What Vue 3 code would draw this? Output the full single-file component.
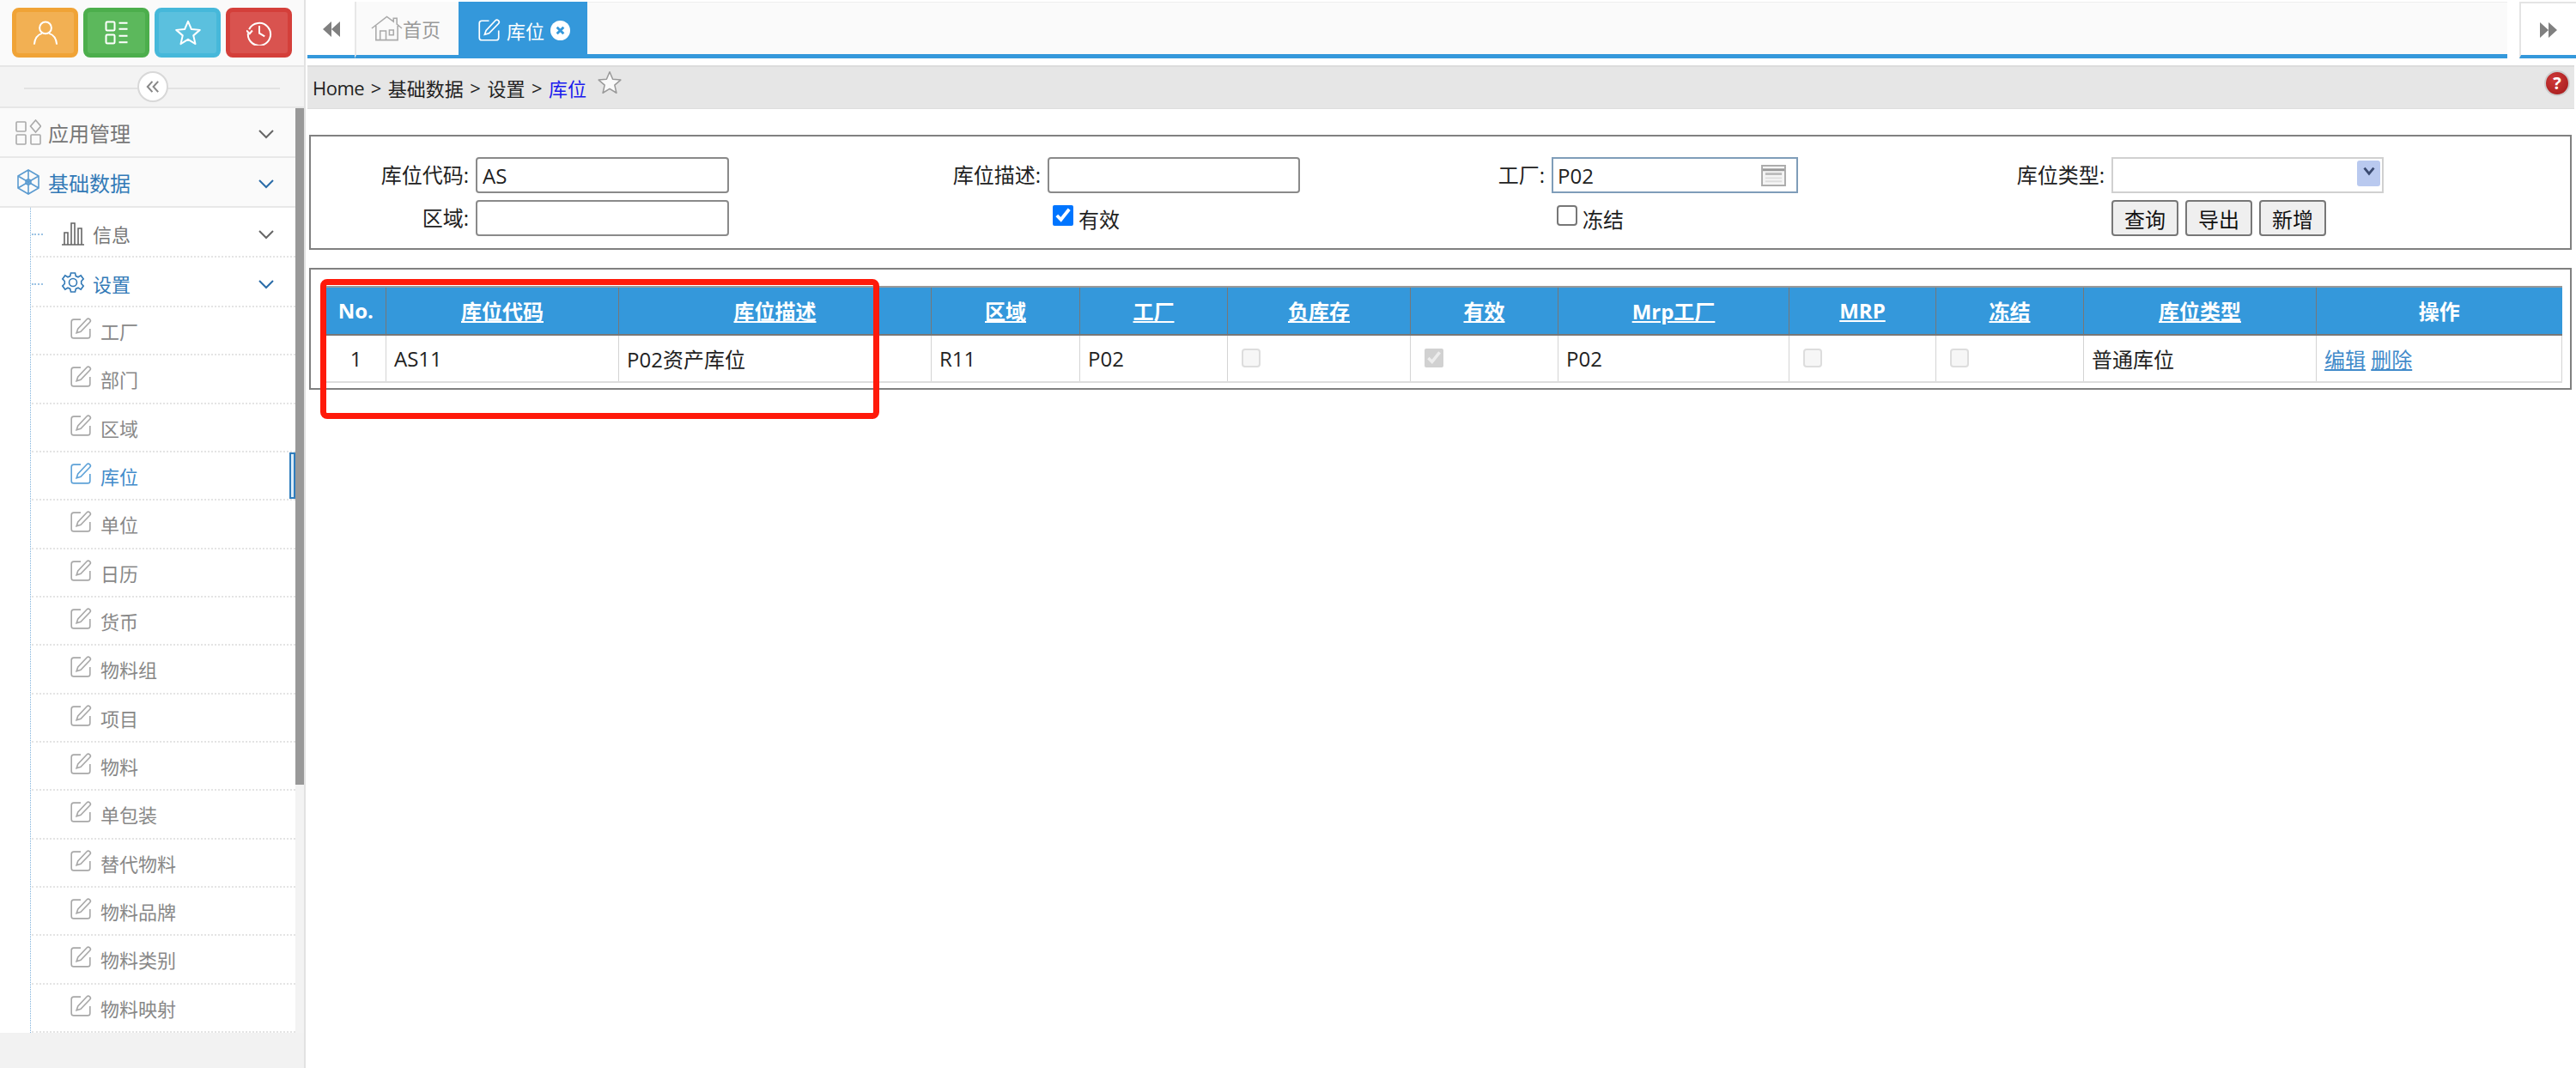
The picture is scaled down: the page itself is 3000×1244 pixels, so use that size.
<template>
  <div class="page">
    <aside class="sidebar">
      <div class="shortcuts">
        <div class="shortcut orange">
          <svg viewBox="0 0 24 24" class="shortcut-icon"><circle cx="12" cy="7.5" r="5.5" /><path d="M1.5 23c.5-6 3-9 7.2-10.3M22.5 23c-.5-6-3-9-7.2-10.3" /></svg>
        </div>
        <div class="shortcut green">
          <svg viewBox="0 0 24 24" class="shortcut-icon"><rect x="2" y="2" width="8" height="8" rx="1" /><rect x="2" y="14" width="8" height="8" rx="1" /><path d="M14 3h8M14 8.500h8M14 15h8M14 21h8" /></svg>
        </div>
        <div class="shortcut blue">
          <svg viewBox="0 0 24 24" class="shortcut-icon"><path d="M12 1.500l3.100 7.300 7.900.7-6 5.200 1.800 7.800L12 18.300l-6.800 4.200L7 14.700 1 9.500l7.900-.7z" stroke-linejoin="round" /></svg>
        </div>
        <div class="shortcut red">
          <svg viewBox="0 0 24 24" class="shortcut-icon"><path d="M2.500 9A10.500 10.500 0 1 1 1.500 12.500" /><path d="M0 10l3 3 2.500-3" /><path d="M12 5.500V12.500l5 3" /></svg>
        </div>
      </div>
      <div class="collapse-strip">
        <span class="collapse-btn">
          <svg viewBox="0 0 16 16" width="18" height="18"><path d="M7.500 2.500 2.500 8l5 5.500M13.500 2.500 8.500 8l5 5.500" /></svg>
        </span>
      </div>
      <div class="menu-wrap">
        <nav class="menu">
          <div class="row top-row">
            <svg viewBox="0 0 30 30" class="top-icon"><rect x="1" y="3" width="11" height="11" rx="1" /><rect x="1" y="18" width="11" height="11" rx="1" /><rect x="18" y="18" width="11" height="11" rx="1" /><path d="M23.500 1l6 7-6 7-6-7z" /></svg>
            <span>应用管理</span>
            <svg viewBox="0 0 20 12" class="chevron"><path d="M2 2l8 8 8-8" /></svg>
          </div>
          <div class="row top-row is-open">
            <svg viewBox="0 0 30 30" class="top-icon"><path d="M15 1l12 7v14l-12 7-12-7V8zM3 8l24 14M27 8L3 22M15 1v28" /><circle cx="15" cy="15" r="3" /></svg>
            <span>基础数据</span>
            <svg viewBox="0 0 20 12" class="chevron"><path d="M2 2l8 8 8-8" /></svg>
          </div>
          <div class="tree">
            <div class="row sub-row">
              <svg viewBox="0 0 28 28" class="sub-icon"><path d="M1 27h26M4 27V13h4v14M12 27V2h4v25M20 27V8h4v19" /></svg>
              <span>信息</span>
              <svg viewBox="0 0 20 12" class="chevron"><path d="M2 2l8 8 8-8" /></svg>
            </div>
            <div class="row sub-row is-open">
              <svg viewBox="0 0 28 28" class="sub-icon"><path d="M11.500 2h5l.8 3.600 2.700 1.200 3.200-1.900 3 4-2.500 2.600v3l2.500 2.600-3 4-3.200-1.900-2.700 1.200-.8 3.600h-5l-.8-3.600L8 19.200l-3.200 1.900-3-4 2.500-2.600v-3L1.800 8.900l3-4L8 6.800l2.700-1.200z" /><circle cx="14" cy="13" r="4.500" /></svg>
              <span>设置</span>
              <svg viewBox="0 0 20 12" class="chevron"><path d="M2 2l8 8 8-8" /></svg>
            </div>
            <div
              v-for="item in leafItems"
              :key="item"
              class="row leaf-row"
              :class="{ 'is-active': item === '库位' }"
            >
              <svg viewBox="0 0 24 24" class="leaf-icon"><path d="M12 2H4.500A2.500 2.500 0 0 0 2 4.500v15A2.500 2.500 0 0 0 4.500 22h15a2.500 2.500 0 0 0 2.500-2.500V12" /><path d="M18.500 1.800a2.100 2.100 0 0 1 3.300 3.100L12 15l-4.500 1.300L9 12z" /></svg>
              <span>{{ item }}</span>
            </div>
          </div>
        </nav>
        <div class="scroll-track"><div class="scroll-thumb"></div></div>
      </div>
      <div class="sidebar-foot"></div>
    </aside>

    <main class="main">
      <div class="tabbar">
        <div class="tab-nav">
          <svg viewBox="0 0 20 18" width="20" height="18"><path d="M10 0v18L0 9zM20 0v18L10 9z" /></svg>
        </div>
        <div class="tab tab-home">
          <svg viewBox="0 0 38 30" class="home-icon"><path d="M1 15L19 1l8 6V3h4v7l6 5M6 12v17h26V12M11 29V18h7v11M22 17h5v6h-5z" /></svg>
          <span>首页</span>
        </div>
        <div class="tab tab-active">
          <svg viewBox="0 0 24 24" class="tab-edit"><path d="M12 2H4.500A2.500 2.500 0 0 0 2 4.500v15A2.500 2.500 0 0 0 4.500 22h15a2.500 2.500 0 0 0 2.500-2.500V12" /><path d="M18.500 1.800a2.100 2.100 0 0 1 3.300 3.100L12 15l-4.500 1.300L9 12z" /></svg>
          <span>库位</span>
          <svg viewBox="0 0 24 24" class="tab-close"><circle cx="12" cy="12" r="12" fill="#fff" /><path d="M8 8l8 8M16 8l-8 8" stroke="#3498db" stroke-width="3" /></svg>
        </div>
        <div class="tab-rest"></div>
        <div class="tab-nav tab-nav-right">
          <svg viewBox="0 0 20 18" width="20" height="18"><path d="M0 0v18L10 9zM10 0v18L20 9z" /></svg>
        </div>
      </div>

      <div class="breadcrumb">
        <span>Home</span><i>&gt;</i><span>基础数据</span><i>&gt;</i><span>设置</span><i>&gt;</i><a>库位</a>
        <svg viewBox="0 0 24 24" class="crumb-star"><path d="M12 1.500l3.100 7.300 7.900.7-6 5.200 1.800 7.800L12 18.300l-6.800 4.200L7 14.700 1 9.500l7.900-.7z" stroke-linejoin="round" /></svg>
        <span class="help">?</span>
      </div>

      <section class="panel filter">
        <label class="field-label">库位代码:</label>
        <input class="text-input" value="AS" />
        <label class="field-label">库位描述:</label>
        <input class="text-input" />
        <label class="field-label">工厂:</label>
        <div class="date-input">
          <span>P02</span>
          <svg viewBox="0 0 30 26" width="29" height="25"><rect x="1" y="1" width="28" height="24" fill="#f4f4f4" stroke="#aaa" stroke-width="2" /><path d="M2 6h26" stroke="#999" stroke-width="3" /><path d="M5 11h20" stroke="#bbb" stroke-width="3" /><path d="M5 16h20M5 20h20" stroke="#ddd" stroke-width="2" /></svg>
        </div>
        <label class="field-label">库位类型:</label>
        <div class="select-input">
          <span class="select-drop">
            <svg viewBox="0 0 14 10" width="16" height="11"><path d="M2 1.500l5 6 5-6" /></svg>
          </span>
        </div>

        <label class="field-label">区域:</label>
        <input class="text-input" />
        <span></span>
        <label class="check check-a"><input type="checkbox" checked />有效</label>
        <span></span>
        <label class="check"><input type="checkbox" />冻结</label>
        <span></span>
        <div class="actions">
          <button>查询</button>
          <button>导出</button>
          <button>新增</button>
        </div>
      </section>

      <section class="panel result">
        <table class="grid">
          <colgroup>
            <col v-for="col in columns" :key="col.title" :style="{ width: col.width + 'px' }" />
          </colgroup>
          <thead>
            <tr>
              <th v-for="col in columns" :key="col.title">
                <a v-if="col.sort">{{ col.title }}</a>
                <template v-else>{{ col.title }}</template>
              </th>
            </tr>
          </thead>
          <tbody>
            <tr>
              <td class="center">1</td>
              <td>AS11</td>
              <td>P02资产库位</td>
              <td>R11</td>
              <td>P02</td>
              <td><input type="checkbox" disabled /></td>
              <td><input type="checkbox" checked disabled /></td>
              <td>P02</td>
              <td><input type="checkbox" disabled /></td>
              <td><input type="checkbox" disabled /></td>
              <td>普通库位</td>
              <td class="ops"><a>编辑</a> <a>删除</a></td>
            </tr>
          </tbody>
        </table>
        <div class="annotation"></div>
      </section>
    </main>
  </div>
</template>

<script setup>
const leafItems = [
  '工厂', '部门', '区域', '库位', '单位', '日历', '货币', '物料组',
  '项目', '物料', '单包装', '替代物料', '物料品牌', '物料类别', '物料映射',
]

const columns = [
  { title: 'No.', width: 70 },
  { title: '库位代码', width: 271, sort: true },
  { title: '库位描述', width: 364, sort: true },
  { title: '区域', width: 173, sort: true },
  { title: '工厂', width: 172, sort: true },
  { title: '负库存', width: 213, sort: true },
  { title: '有效', width: 172, sort: true },
  { title: 'Mrp工厂', width: 269, sort: true },
  { title: 'MRP', width: 171, sort: true },
  { title: '冻结', width: 172, sort: true },
  { title: '库位类型', width: 271, sort: true },
  { title: '操作', width: 286 },
]
</script>

<style>
html, body {
  margin: 0;
  background: #fff;
  overflow: hidden;
}
</style>

<style scoped>
.page {
  display: flex;
  width: 3000px;
  height: 1244px;
  overflow: hidden;
  background: #fff;
  color: #222;
  font-family: "Open Sans", "Noto Sans CJK SC", sans-serif;
  font-size: 24px;
}

/* sidebar */
.sidebar {
  display: flex;
  flex-direction: column;
  flex: none;
  width: 356px;
  box-sizing: border-box;
  border-right: 2px solid #e2e2e2;
}

.shortcuts {
  display: flex;
  flex: none;
  gap: 6px;
  height: 76px;
  box-sizing: border-box;
  padding: 9px 14px 9px 14px;
  background: #fafafa;
}

.shortcut {
  display: flex;
  align-items: center;
  justify-content: center;
  flex: 1;
  box-sizing: border-box;
  border: 5px solid;
  border-radius: 8px;
}

.orange { background: #f2b053; border-color: #f0a336; }
.green { background: #5cb85c; border-color: #4cae4c; }
.blue { background: #5bc0de; border-color: #46b8da; }
.red { background: #d9534f; border-color: #d43f3a; }

.shortcut-icon {
  width: 30px;
  height: 30px;
  fill: none;
  stroke: #fff;
  stroke-width: 1.6;
}

.collapse-strip {
  display: flex;
  align-items: center;
  justify-content: center;
  position: relative;
  flex: none;
  height: 50px;
  box-sizing: border-box;
  border-top: 2px solid #e6e6e6;
  border-bottom: 2px solid #e6e6e6;
  background: #f3f3f3;
}

.collapse-strip::before {
  content: "";
  position: absolute;
  left: 28px;
  right: 28px;
  top: 24px;
  border-top: 2px solid #e2e2e2;
}

.collapse-btn {
  display: flex;
  align-items: center;
  justify-content: center;
  position: relative;
  width: 36px;
  height: 36px;
  margin-left: 1px;
  box-sizing: border-box;
  border: 2px solid #d8d8d8;
  border-radius: 50%;
  background: #fff;
}

.collapse-btn svg {
  fill: none;
  stroke: #888;
  stroke-width: 1.800;
}

.menu-wrap {
  display: flex;
  flex: none;
  height: 1077px;
}

.menu {
  flex: none;
  width: 344px;
  overflow: hidden;
  background: #fff;
}

.scroll-track {
  flex: none;
  width: 10px;
  background: #f3f3f3;
}

.scroll-thumb {
  height: 788px;
  background: #999;
}

.sidebar-foot {
  flex: 1;
  background: #f2f2f2;
}

.row {
  display: flex;
  align-items: center;
  box-sizing: border-box;
}

.chevron {
  width: 20px;
  height: 12px;
  margin-top: 3px;
  margin-left: auto;
  margin-right: 24px;
  fill: none;
  stroke: #666;
  stroke-width: 2;
}

.top-row {
  height: 58px;
  padding-left: 18px;
  border-bottom: 2px solid #e8e8e8;
  background: #fafafa;
  color: #777;
  font-size: 24px;
}

.top-row.is-open,
.sub-row.is-open {
  color: #337ab7;
}

.top-row.is-open .chevron,
.sub-row.is-open .chevron {
  stroke: #2a6ca8;
}

.top-icon {
  flex: none;
  width: 30px;
  height: 30px;
  margin-right: 8px;
  fill: none;
  stroke: #aaa;
  stroke-width: 1.600;
}

.is-open .top-icon {
  stroke: #5b9bd0;
}

.tree {
  position: relative;
}

.tree::before {
  content: "";
  position: absolute;
  left: 35px;
  top: 0;
  bottom: 0;
  border-left: 1px dotted #7fb2dc;
}

.sub-row {
  position: relative;
  height: 58px;
  margin-left: 37px;
  padding-top: 3px;
  padding-left: 34px;
  border-bottom: 2px dotted #e4e4e4;
  color: #777;
  font-size: 22px;
}

.sub-row::before {
  content: "";
  position: absolute;
  left: 0;
  top: 30px;
  width: 13px;
  border-top: 2px dotted #9cc3e4;
}

.sub-icon {
  flex: none;
  width: 28px;
  height: 28px;
  margin-right: 9px;
  fill: none;
  stroke: #666;
  stroke-width: 1.600;
}

.sub-row.is-open .sub-icon {
  stroke: #337ab7;
}

.leaf-row {
  position: relative;
  height: 56.33px;
  margin-left: 37px;
  padding-left: 44px;
  border-bottom: 2px dotted #e4e4e4;
  color: #888;
  font-size: 22px;
}

.leaf-icon {
  flex: none;
  width: 26px;
  height: 26px;
  margin-right: 10px;
  margin-top: -4px;
  fill: none;
  stroke: #a8a8a8;
  stroke-width: 1.500;
}

.leaf-row.is-active {
  color: #428bca;
}

.leaf-row.is-active .leaf-icon {
  stroke: #5ea2d8;
}

.leaf-row.is-active::after {
  content: "";
  position: absolute;
  right: 0;
  top: 0;
  bottom: 0;
  width: 7px;
  box-sizing: border-box;
  border: 2px solid #2f7dbd;
  background: #dcecf8;
}

/* main area */
.main {
  display: flex;
  flex-direction: column;
  flex: 1;
  min-width: 0;
  padding-left: 2px;
}

.tabbar {
  display: flex;
  flex: none;
  height: 68px;
  margin-bottom: 8px;
  padding-top: 2px;
  box-sizing: border-box;
}

.tab-nav {
  display: flex;
  align-items: center;
  justify-content: center;
  flex: none;
  width: 55px;
  box-sizing: border-box;
  padding-top: 2px;
  border-bottom: 4px solid #3498db;
  background: #fff;
}

.tab-nav svg {
  fill: #808080;
}

.tab-nav-right {
  width: 66px;
  margin-left: 14px;
  border-top: 2px solid #e4e4e4;
  border-left: 2px solid #e4e4e4;
}

.tab {
  display: flex;
  align-items: center;
  flex: none;
  box-sizing: border-box;
  font-size: 22px;
}

.tab-home {
  width: 121px;
  padding-left: 17px;
  border-left: 2px solid #e8e8e8;
  border-bottom: 4px solid #3498db;
  background: #fafafa;
  color: #999;
}

.home-icon {
  width: 37px;
  height: 30px;
  margin-right: 0;
  fill: none;
  stroke: #aaa;
  stroke-width: 1.600;
}

.tab-active {
  width: 150px;
  padding-left: 22px;
  background: #3498db;
  color: #fff;
}

.tab-edit {
  width: 27px;
  height: 27px;
  margin-right: 7px;
  fill: none;
  stroke: #fff;
  stroke-width: 1.500;
}

.tab-close {
  width: 23px;
  height: 23px;
  margin-left: 7px;
}

.tab-rest {
  flex: 1;
  border-top: 1px solid #eee;
  border-bottom: 5px solid #3498db;
  background: #fafafa;
}

.breadcrumb {
  display: flex;
  align-items: center;
  flex: none;
  height: 51px;
  box-sizing: border-box;
  margin-right: 2px;
  padding-left: 6px;
  border-top: 2px solid #dcdcdc;
  border-bottom: 1px solid #ddd;
  background: #e6e6e6;
  font-size: 22px;
}

.breadcrumb span:first-child {
  letter-spacing: -0.5px;
}

.breadcrumb i {
  margin: 0 7.500px;
  font-style: normal;
}

.breadcrumb a {
  color: #1a1aee;
}

.crumb-star {
  width: 28px;
  height: 28px;
  margin-left: 13px;
  margin-top: -12px;
  fill: #fafafa;
  stroke: #999;
  stroke-width: 1.300;
}

.help {
  display: flex;
  align-items: center;
  justify-content: center;
  width: 26px;
  height: 26px;
  margin-left: auto;
  margin-right: 5px;
  margin-top: -10px;
  border: 2px solid #ccc;
  border-radius: 50%;
  background: radial-gradient(circle at 40% 35%, #d03a3a, #a01818);
  color: #fff;
  font-size: 20px;
  font-weight: 700;
  line-height: 1;
}

.panel {
  position: relative;
  flex: none;
  box-sizing: border-box;
  margin: 30px 5px 0 2px;
  border: 2px solid #808080;
  background: #fff;
}

.filter {
  display: grid;
  grid-template-columns: 184px 295px 355px 294px 277px 287px 349px 317px;
  grid-template-rows: 42px 42px;
  column-gap: 8px;
  row-gap: 8px;
  align-items: center;
  height: 134px;
  padding-top: 24px;
}

.field-label {
  text-align: right;
  line-height: 1;
}

.text-input {
  width: 100%;
  height: 42px;
  box-sizing: border-box;
  padding: 0 6px;
  border: 2px solid #8a8a8a;
  border-radius: 4px;
  background: #fff;
  color: #222;
  font: inherit;
  outline: none;
}

.date-input {
  display: flex;
  align-items: center;
  justify-content: space-between;
  height: 42px;
  box-sizing: border-box;
  padding: 0 12px 0 5px;
  border: 2px solid #7f9db9;
}

.select-input {
  display: flex;
  justify-content: flex-end;
  height: 42px;
  box-sizing: border-box;
  padding: 2px 2px 0 0;
  border: 2px solid #d0d0d0;
}

.select-drop {
  display: flex;
  align-items: center;
  justify-content: center;
  width: 27px;
  height: 30px;
  border-radius: 3px;
  background: #b9c9ef;
}

.select-drop svg {
  margin-top: -6px;
  fill: none;
  stroke: #3a4a70;
  stroke-width: 2.500;
}

.check {
  display: flex;
  align-items: center;
  padding-left: 6px;
}

.check-a {
  padding-left: 6px;
}

.check input {
  width: 24px;
  height: 24px;
  margin: -6px 6px 0 0;
}

.check input:not(:checked) {
  appearance: none;
  box-sizing: border-box;
  border: 2px solid #777;
  border-radius: 4px;
  background: #fff;
}

.actions {
  display: flex;
  gap: 8px;
}

.actions button {
  width: 78px;
  height: 42px;
  padding: 0;
  border: 2px solid #777;
  border-radius: 4px;
  background: #efefef;
  color: #111;
  font: inherit;
}

.result {
  height: 142px;
  margin-top: 21px;
  padding: 19px 0 0 17px;
}

.grid {
  width: 2604px;
  border-collapse: collapse;
  table-layout: fixed;
}

.grid th {
  height: 52px;
  padding: 0 0 2px;
  border-top: 2px solid #999;
  border-right: 1px solid #777;
  border-bottom: 2px solid #777;
  background: #3498db;
  color: #fff;
  font-weight: 700;
  text-align: center;
}

.grid th:last-child {
  border-right: none;
}

.grid th a {
  text-decoration: underline;
}

.grid td {
  height: 53px;
  padding: 0 0 0 9px;
  border: 1px solid #d4d4d4;
  border-bottom: 2px solid #ddd;
}

.grid td.center {
  padding: 0;
  text-align: center;
}

.grid td input {
  width: 22px;
  height: 22px;
  margin: 0 0 6px 7px;
  vertical-align: middle;
}

.grid td input:not(:checked) {
  appearance: none;
  box-sizing: border-box;
  border: 2px solid #ddd;
  border-radius: 4px;
  background: #f6f6f6;
}

.ops a {
  color: #428bca;
  text-decoration: underline;
}

.annotation {
  position: absolute;
  left: 11px;
  top: 11px;
  width: 651px;
  height: 163px;
  box-sizing: border-box;
  border: 7px solid #ff1a0a;
  border-radius: 8px;
  pointer-events: none;
}
</style>
